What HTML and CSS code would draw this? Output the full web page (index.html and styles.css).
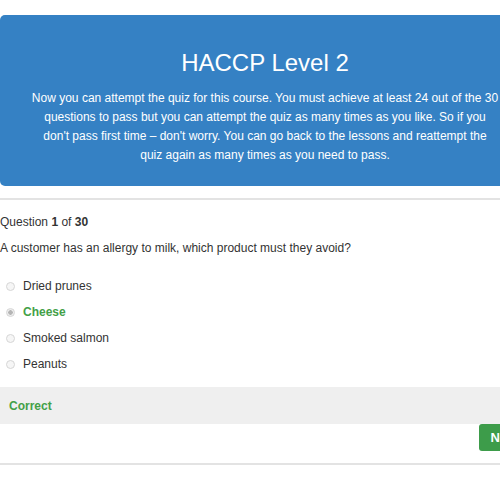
FILE: index.html
```html
<!DOCTYPE html>
<html>
<head>
  <link rel="stylesheet" href="styles.css">
</head>
<body>

<div class="page">

  <div class="intro">
    <h1 class="intro-title">HACCP Level 2</h1>
    <p class="intro-text">Now you can attempt the quiz for this course. You must achieve at least 24 out of the 30 questions to pass but you can attempt the quiz as many times as you like. So if you don't pass first time &ndash; don't worry. You can go back to the lessons and reattempt the<br>quiz again as many times as you need to pass.</p>
  </div>

  <div class="quiz">
    <p class="counter">Question <b>1</b> of <b>30</b></p>
    <p class="prompt">A customer has an allergy to milk, which product must they avoid?</p>

    <ul class="answers">
      <li class="answer"><span class="radio"></span>Dried prunes</li>
      <li class="answer right"><span class="radio checked"></span>Cheese</li>
      <li class="answer"><span class="radio"></span>Smoked salmon</li>
      <li class="answer"><span class="radio"></span>Peanuts</li>
    </ul>

    <div class="result">Correct</div>

    <div class="actions">
      <button class="next">Next</button>
    </div>
  </div>

</div>

</body>
</html>
```

FILE: styles.css
```css
html, body {
  margin: 0;
  overflow: hidden;
  background: #ffffff;
}

body {
  font-family: "Liberation Sans", Arial, sans-serif;
  color: #333333;
}

.page {
  width: 530px;
  padding-top: 15px;
}

.intro {
  background-color: #3581c4;
  color: #ffffff;
  border-radius: 5px;
  padding: 34px 30px 21px;
  text-align: center;
}

.intro-title {
  margin: 0;
  font-size: 24px;
  font-weight: normal;
  line-height: 28px;
}

.intro-text {
  margin: 12px 0 0;
  font-size: 12px;
  line-height: 19px;
}

.quiz {
  margin-top: 12px;
  border-top: 2px solid #e3e3e3;
  border-bottom: 2px solid #e3e3e3;
  padding-top: 12px;
  padding-bottom: 12px;
}

.counter {
  margin: 0;
  font-size: 12px;
  line-height: 20px;
}

.prompt {
  margin: 6px 0 0;
  font-size: 12px;
  line-height: 20px;
}

.answers {
  list-style: none;
  margin: 15px 0 0;
  padding: 0;
}

.answer {
  display: flex;
  align-items: center;
  height: 26px;
  font-size: 12px;
  padding-left: 6px;
}

.answer.right {
  color: #43a047;
  font-weight: bold;
}

.radio {
  width: 7px;
  height: 7px;
  border: 1px solid #d6d6d6;
  border-radius: 50%;
  background: #f6f6f6;
  margin-right: 8px;
}

.radio.checked {
  background: radial-gradient(circle, #b5b5b5 0 2px, #eeeeee 2.5px);
}

.result {
  margin-top: 10px;
  background: #efefef;
  height: 37px;
  display: flex;
  align-items: center;
  padding-left: 9px;
  font-size: 12px;
  font-weight: bold;
  color: #43a047;
}

.actions {
  display: flex;
  justify-content: flex-end;
}

.next {
  width: 51px;
  height: 27px;
  border: none;
  border-radius: 3px;
  background: #3d9c4a;
  color: #ffffff;
  font-family: inherit;
  font-size: 13px;
  font-weight: bold;
  padding: 0;
}
```
